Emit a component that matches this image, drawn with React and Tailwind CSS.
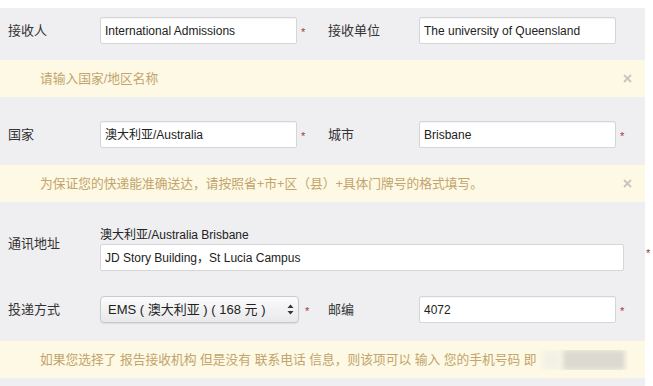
import React from 'react';

const font = { fontFamily: '"Liberation Sans", "Noto Sans CJK SC", sans-serif' };

function Star({ className = '' }) {
    return <span className={`text-[11px] text-[#9b3b3b] leading-none ${className}`}>*</span>;
}

function Field({ value }) {
    return (
        <div className="w-[197px] shrink-0 h-[27px] bg-white border border-[#d6d6d8] rounded-[2px] flex items-center px-[4px] text-[12px] text-[#222] shadow-[inset_0_1px_1px_rgba(0,0,0,0.05)]">
            {value}
        </div>
    );
}

function Alert({ children, close = true }) {
    return (
        <div className="h-[37px] bg-[#fdf9e4] flex items-center pl-[40px] pr-[14px] text-[12.75px] text-[#c3a46c]">
            <div className="flex-1 whitespace-nowrap overflow-hidden">{children}</div>
            {close && (
                <svg width="9" height="9" viewBox="0 0 9 9" className="mr-[-1px]">
                    <path d="M1 1 L8 8 M8 1 L1 8" stroke="#c6c6be" strokeWidth="1.8" />
                </svg>
            )}
        </div>
    );
}

export default function App() {
    return (
        <div className="w-[653px] h-[386px] bg-white pt-[8px] overflow-hidden" style={font}>
            <div className="w-[645px] h-[378px] bg-[#efeef1] pt-[9px]">
                {/* row 1 */}
                <div className="flex items-center h-[27px]">
                    <div className="w-[100px] shrink-0 pl-[8px] text-[13px] text-[#333]">接收人</div>
                    <Field value="International Admissions" />
                    <div className="w-[31px] shrink-0 self-start pl-[4px] pt-[2px]"><Star /></div>
                    <div className="w-[91px] shrink-0 text-[13px] text-[#333]">接收单位</div>
                    <Field value="The university of Queensland" />
                </div>

                <div className="mt-[16px]">
                    <Alert>请输入国家/地区名称</Alert>
                </div>

                {/* row 2 */}
                <div className="flex items-center h-[27px] mt-[24px]">
                    <div className="w-[100px] shrink-0 pl-[8px] text-[13px] text-[#333]">国家</div>
                    <Field value="澳大利亚/Australia" />
                    <div className="w-[31px] shrink-0 self-start pl-[4px] pt-[2px]"><Star /></div>
                    <div className="w-[91px] shrink-0 text-[13px] text-[#333]">城市</div>
                    <Field value="Brisbane" />
                    <div className="self-start pl-[4px] pt-[2px]"><Star /></div>
                </div>

                <div className="mt-[17px]">
                    <Alert>为保证您的快递能准确送达，请按照省+市+区（县）+具体门牌号的格式填写。</Alert>
                </div>

                {/* address */}
                <div className="flex mt-[25px]">
                    <div className="w-[100px] shrink-0 pl-[8px] pt-[7px] text-[13px] text-[#333]">通讯地址</div>
                    <div className="flex flex-col">
                        <div className="text-[12px] text-[#222] h-[17px] leading-[17px]">澳大利亚/Australia Brisbane</div>
                        <div className="flex">
                            <div className="w-[524px] shrink-0 h-[27px] bg-white border border-[#d6d6d8] rounded-[2px] flex items-center px-[4px] text-[12px] text-[#222]">
                                JD Story Building，St Lucia Campus
                            </div>
                            <div className="shrink-0 pl-[22px] mt-[-4px]"><Star /></div>
                        </div>
                    </div>
                </div>

                {/* row 4 */}
                <div className="flex items-center h-[27px] mt-[25px]">
                    <div className="w-[100px] shrink-0 pl-[8px] text-[13px] text-[#333]">投递方式</div>
                    <div className="w-[199px] shrink-0 h-[27px] rounded-[4px] border border-[#c9c9cc] bg-gradient-to-b from-[#fbfbfb] to-[#e9e9ec] shadow-[0_1px_1px_rgba(0,0,0,0.08)] flex items-center pl-[7px] pr-[4px] text-[13px] text-[#222]">
                        <span className="flex-1">EMS ( 澳大利亚 ) ( 168 元 )</span>
                        <svg width="7" height="11" viewBox="0 0 7 11">
                            <path d="M3.5 0.5 L6.5 4 L0.5 4 Z" fill="#333" />
                            <path d="M3.5 10.5 L6.5 7 L0.5 7 Z" fill="#333" />
                        </svg>
                    </div>
                    <div className="w-[29px] shrink-0 self-start pl-[6px] pt-[2px]"><Star /></div>
                    <div className="w-[91px] shrink-0 text-[13px] text-[#333]">邮编</div>
                    <Field value="4072" />
                    <div className="self-start pl-[4px] pt-[2px]"><Star /></div>
                </div>

                <div className="mt-[18px]">
                    <Alert close={false}>
                        <div className="flex items-center">
                            <span>如果您选择了 报告接收机构 但是没有 联系电话 信息，则该项可以 输入 您的手机号码 即</span>
                            <span className="ml-[6px] w-[18px] h-[20px] bg-[#f3f1e6] blur-[2px]"></span>
                            <span className="ml-[2px] w-[62px] h-[20px] bg-[#dcdad0] blur-[2px]"></span>
                        </div>
                    </Alert>
                </div>
            </div>
        </div>
    );
}
